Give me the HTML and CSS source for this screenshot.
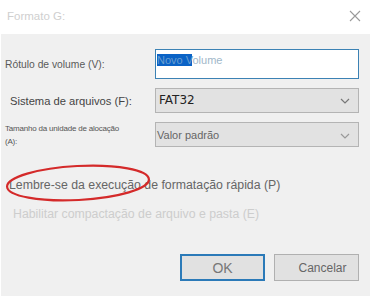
FILE: index.html
```html
<!DOCTYPE html>
<html lang="pt">
<head>
<meta charset="utf-8">
<link rel="stylesheet" href="styles.css">
</head>
<body>
<div class="titlebar">
  <span class="title">Formato G:</span>
  <svg class="close" width="12" height="12" viewBox="0 0 12 12"><path d="M1 1L11 11M11 1L1 11" stroke="#9a9a9a" stroke-width="1.1" fill="none"/></svg>
</div>
<div class="panel">
  <div class="form">
    <div class="label l1">Rótulo de volume (V):</div>
    <div class="input"><span class="sel">Novo V</span>olume</div>
    <div class="label l2">Sistema de arquivos (F):</div>
    <div class="select s1"><span class="fat">FAT32</span><svg class="chev" width="10" height="6" viewBox="0 0 10 6"><path d="M1 1L5 5L9 1" stroke="#777" stroke-width="1.2" fill="none"/></svg></div>
    <div class="label l3">Tamanho da unidade de alocação<br>(A):</div>
    <div class="select s2"><span class="val">Valor padrão</span><svg class="chev" width="10" height="6" viewBox="0 0 10 6"><path d="M1 1L5 5L9 1" stroke="#999" stroke-width="1.2" fill="none"/></svg></div>
  </div>
  <div class="check c1">
    Lembre-se da execução de formatação rápida (P)
    <svg class="ellipse" width="160" height="46" viewBox="0 0 160 46"><ellipse cx="77" cy="22" rx="71" ry="17" transform="rotate(-3 77 22)" stroke="#d42a2a" stroke-width="2.2" fill="none"/></svg>
  </div>
  <div class="check c2">Habilitar compactação de arquivo e pasta (E)</div>
  <div class="buttons">
    <div class="btn ok">OK</div>
    <div class="btn cancel">Cancelar</div>
  </div>
</div>
</body>
</html>
```
FILE: styles.css
```css
html, body {
  margin: 0;
  padding: 0;
  background: #ffffff;
  font-family: "Liberation Sans", Arial, sans-serif;
  width: 376px;
  height: 298px;
  overflow: hidden;
}
.titlebar {
  height: 34px;
  display: flex;
  align-items: center;
  justify-content: space-between;
  padding: 0 15px 0 7px;
  box-sizing: border-box;
}
.title {
  color: #cfcfcf;
  font-size: 11.5px;
  margin-top: -2px;
}
.close {
  margin-top: -3px;
}
.panel {
  margin-left: 1px;
  width: 369px;
  height: 262px;
  background: #f0f0f0;
  box-sizing: border-box;
  padding-top: 15px;
  position: relative;
}
.form {
  display: grid;
  grid-template-columns: 154px 204px;
  grid-template-rows: 30px 25px 25px;
  row-gap: 9px;
  align-items: center;
}
.form .s1 { margin-top: -1px; }
.label {
  color: #555;
}
.l1 {
  font-size: 10.3px;
  color: #5a5a5a;
  padding-left: 4px;
  padding-top: 1px;
}
.l2 {
  font-size: 11.2px;
  color: #444;
  padding-left: 9px;
}
.l3 {
  font-size: 8px;
  line-height: 13px;
  color: #555;
  padding-left: 4px;
  letter-spacing: -0.2px;
}
.input {
  height: 30px;
  box-sizing: border-box;
  border: 1px solid #3c82b4;
  background: #fff;
  color: #9fb7c9;
  font-size: 11px;
  padding: 3px 0 0 1px;
  line-height: 15px;
}
.sel {
  background: #0b63c6;
  color: #6a9ed0;
}
.select {
  height: 25px;
  box-sizing: border-box;
  border: 1px solid #b4b4b4;
  background: #e2e2e2;
  display: flex;
  align-items: center;
  justify-content: space-between;
  padding: 0 8px 0 3px;
}
.fat {
  font-family: "DejaVu Sans", sans-serif;
  font-size: 12px;
  color: #222;
}
.val {
  font-size: 11px;
  color: #666;
  margin-left: -2px;
}
.chev { margin-top: 2px; }
.check {
  position: relative;
  font-size: 12.3px;
}
.c1 {
  color: #666;
  margin-top: 31px;
  padding-left: 8px;
  height: 16px;
}
.ellipse {
  position: absolute;
  left: 0;
  top: -17px;
}
.c2 {
  color: #cdcdcd;
  margin-top: 13px;
  padding-left: 12px;
}
.buttons {
  display: flex;
  gap: 9px;
  margin-top: 33px;
  padding-left: 179px;
}
.btn {
  box-sizing: border-box;
  height: 27px;
  background: #e1e1e1;
  display: flex;
  align-items: center;
  justify-content: center;
  color: #777;
}
.ok {
  width: 85px;
  border: 2px solid #2b7ab8;
  font-size: 14px;
}
.cancel {
  width: 85px;
  border: 1px solid #b0b0b0;
  font-size: 12px;
  color: #666;
  padding-left: 12px;
}
```
